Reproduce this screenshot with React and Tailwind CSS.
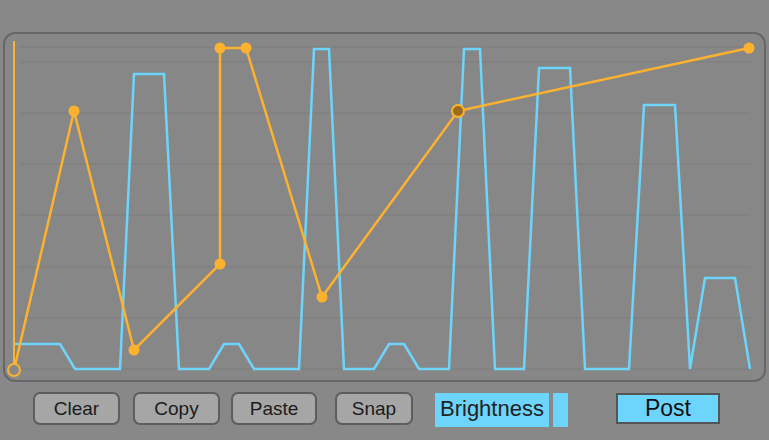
import React from "react";

const gridRows = [47, 62, 113, 164, 215, 267, 318, 369];

const cyanLine = [
	[15, 344], [60, 344], [75, 369], [120, 369], [134, 74], [164, 74], [179, 369],
	[209, 369], [224, 344], [239, 344], [254, 369], [299, 369], [314, 49], [329, 49],
	[344, 369], [374, 369], [389, 344], [404, 344], [419, 369], [449, 369], [464, 49],
	[480, 49], [495, 369], [524, 369], [539, 68], [570, 68], [585, 369], [629, 369],
	[644, 105], [675, 105], [690, 369], [705, 278], [735, 278], [750, 369],
];

const orangeLine = [
	[14, 370], [74, 111], [134, 350], [220, 264], [220, 48], [246, 48], [322, 297],
	[458, 111], [749, 48],
];

const pts = (list) => list.map((p) => p.join(",")).join(" ");

function Envelope() {
	return (
		<svg width="759" height="346" viewBox="5 34 759 346" className="block">
			{gridRows.map((y) => (
				<line key={y} x1="20" x2="750" y1={y} y2={y} stroke="#7c7c7c" strokeWidth="1" />
			))}
			<polyline points={pts(cyanLine)} fill="none" stroke="#6dd4fb" strokeWidth="2.5" strokeLinejoin="miter" />
			<line x1="14" x2="14" y1="41" y2="364" stroke="#fdb22f" strokeWidth="2" />
			<polyline points={pts(orangeLine)} fill="none" stroke="#fdb22f" strokeWidth="2.5" />
			{/* breakpoints */}
			{orangeLine.slice(1).map(([x, y], i) =>
				x === 458 ? null : <circle key={i} cx={x} cy={y} r="5.5" fill="#fdb22f" />
			)}
			<circle cx="458" cy="111" r="6" fill="#9c6b1c" stroke="#fdb22f" strokeWidth="2" />
			<circle cx="14" cy="370" r="6" fill="#878787" stroke="#fdb22f" strokeWidth="2" />
		</svg>
	);
}

function Btn({ label, className }) {
	return (
		<button
			type="button"
			className={`h-[33px] rounded-[7px] border-2 border-[#5d5d5d] bg-[#a6a6a6] text-[19px] leading-none text-[#1b1b1b] ${className}`}
		>
			{label}
		</button>
	);
}

export default function App() {
	return (
		<div className="w-[769px] h-[440px] bg-[#888888] overflow-hidden pt-[32px] pl-[3px]" style={{ fontFamily: '"Liberation Sans", Arial, sans-serif' }}>
			<div className="w-[763px] h-[350px] border-2 border-[#676767] rounded-[12px] bg-[#878787] overflow-hidden">
				<Envelope />
			</div>
			<div className="flex items-start mt-[10px] pl-[30px]">
				<Btn label="Clear" className="w-[87px]" />
				<Btn label="Copy" className="w-[87px] ml-[13px]" />
				<Btn label="Paste" className="w-[86px] ml-[11px]" />
				<Btn label="Snap" className="w-[78px] ml-[18px]" />
				<div className="ml-[22px] mt-[1px] w-[114px] h-[34px] bg-[#6dd4fb] text-[22px] leading-[32px] pl-[5px] text-[#222] whitespace-nowrap overflow-hidden">
					Brightness
				</div>
				<div className="ml-[4px] mt-[1px] w-[15px] h-[34px] bg-[#6dd4fb]" />
				<div className="ml-[48px] mt-[1px] w-[104px] h-[31px] bg-[#6dd4fb] border-2 border-[#555] text-[23px] leading-[27px] text-center text-[#111]">
					Post
				</div>
			</div>
		</div>
	);
}
